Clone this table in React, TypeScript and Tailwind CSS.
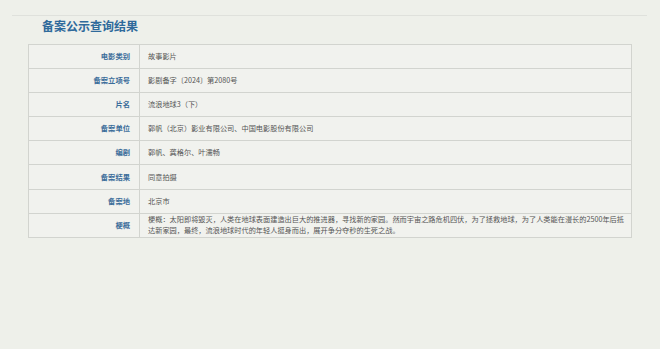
import React from 'react';

const rows = [
    { label: '电影类别', value: '故事影片' },
    { label: '备案立项号', value: '影剧备字〔2024〕第2080号' },
    { label: '片名', value: '流浪地球3（下）' },
    { label: '备案单位', value: '郭帆（北京）影业有限公司、中国电影股份有限公司' },
    { label: '编剧', value: '郭帆、龚格尔、叶濡畅' },
    { label: '备案结果', value: '同意拍摄' },
    { label: '备案地', value: '北京市' },
    {
        label: '梗概',
        value: '梗概：太阳即将毁灭，人类在地球表面建造出巨大的推进器，寻找新的家园。然而宇宙之路危机四伏，为了拯救地球，为了人类能在漫长的2500年后抵达新家园，最终，流浪地球时代的年轻人挺身而出，展开争分夺秒的生死之战。',
    },
];

const App: React.FC = () => {
    return (
        <div
            className="w-[660px] h-[349px] bg-[#eef0ea] overflow-hidden"
            style={{ fontFamily: '"Noto Sans CJK SC", "Liberation Sans", sans-serif' }}
        >
            <div className="pt-[15px] pl-[12px] pr-[13px]">
                <div className="border-t border-[#dfe1dc]"></div>
            </div>
            <h1 className="pl-[42px] pt-[1px] h-[28px] text-[12px] leading-[18px] font-bold text-[#2f6a9b]">
                备案公示查询结果
            </h1>
            <div className="ml-[28px] w-[604px] border border-[#d2d4cf] bg-[#f1f2ee]">
                {rows.map((row, i) => (
                    <div
                        key={row.label}
                        className={`grid grid-cols-[111px_1fr] ${i > 0 ? 'border-t border-[#d2d4cf]' : ''}`}
                    >
                        <div className="flex items-center justify-end pr-[9px] min-h-[23.1px] text-[7.3px] font-bold text-[#3b6d9a] border-r border-[#d2d4cf]">
                            {row.label}
                        </div>
                        <div className="flex items-center pl-[8px] pr-0 min-h-[23.1px] text-[7.2px] leading-[11px] text-[#555555]">
                            {row.value}
                        </div>
                    </div>
                ))}
            </div>
        </div>
    );
};

export default App;
